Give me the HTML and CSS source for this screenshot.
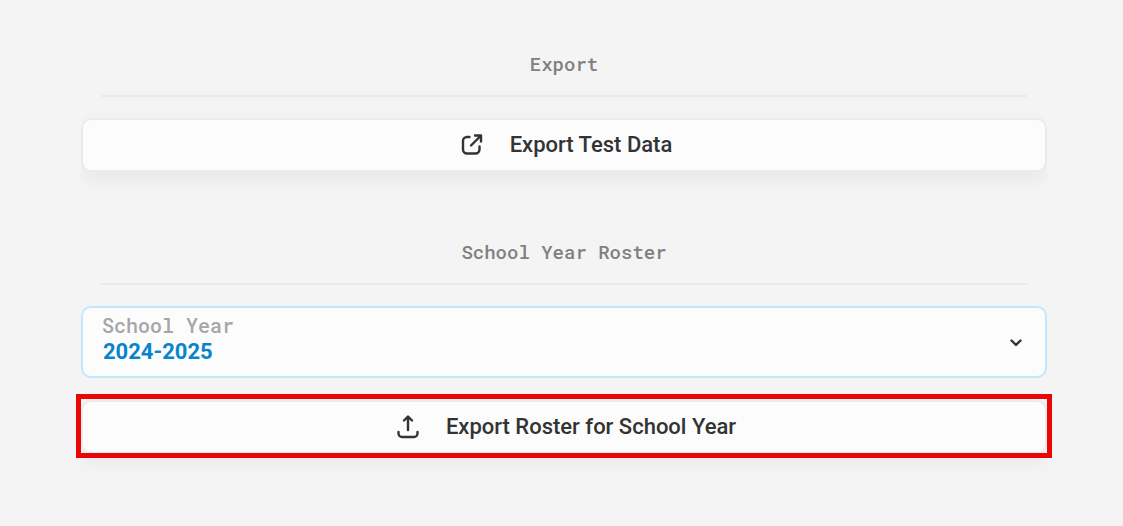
FILE: index.html
```html
<!DOCTYPE html>
<html lang="en">
<head>
<meta charset="UTF-8">
<meta name="viewport" content="width=device-width, initial-scale=1.0">
<title>Export</title>
<link rel="stylesheet" href="styles.css">
</head>
<body>
  <main class="container">
    <section class="export-section">
      <h2>Export</h2>
      <button type="button" class="action-button">
        <svg class="icon" viewBox="0 0 24 24" aria-hidden="true">
          <path d="M9.500 4H7a4 4 0 0 0-4 4v8.500a4 4 0 0 0 4 4h8.500a4 4 0 0 0 4-4V13.500"/>
          <path d="M11 12.500L20.500 3M15 2.500h6v6"/>
        </svg>
        <span>Export Test Data</span>
      </button>
    </section>

    <section class="export-section">
      <h2>School Year Roster</h2>
      <div class="select-field">
        <label for="school-year">School Year</label>
        <select id="school-year">
          <option value="2024-2025">2024-2025</option>
        </select>
        <svg class="chevron" viewBox="0 0 12 8" aria-hidden="true">
          <path d="M1.500 1.500L6 6l4.500-4.500"/>
        </svg>
      </div>
      <div class="highlight">
        <button type="button" class="action-button">
          <svg class="icon" viewBox="0 0 24 24" aria-hidden="true">
            <path d="M12 15V2M8 5.500L12 1.500l4 4"/>
            <path d="M2.500 17v1.500a3.500 3.500 0 0 0 3.500 3.500h12a3.500 3.500 0 0 0 3.500-3.500V17"/>
          </svg>
          <span>Export Roster for School Year</span>
        </button>
      </div>
    </section>
  </main>
</body>
</html>
```

FILE: styles.css
```css
* {
  box-sizing: border-box;
}
body {
  margin: 0;
  background-color: #f4f4f4;
  color: #333333;
  font-family: Roboto, sans-serif;
}
.container {
  padding: 52px 76px 52px 81px;
}
.export-section + .export-section {
  margin-top: 68px;
}
h2 {
  margin: 0 20px 21px;
  padding-bottom: 19px;
  border-bottom: 2px solid #eaeaea;
  color: #808080;
  font-family: "Roboto Mono", "DejaVu Sans Mono", monospace;
  font-size: 19px;
  font-weight: 500;
  line-height: 24px;
  text-align: center;
}
.action-button {
  display: flex;
  align-items: center;
  justify-content: center;
  gap: 26px;
  width: 100%;
  height: 54px;
  padding: 0 0 0 4px;
  border: 2px solid #ebebeb;
  border-radius: 10px;
  background-color: #fcfcfc;
  box-shadow: 0 8px 20px rgba(0, 0, 0, 0.05);
  clip-path: inset(-30px 0);
  color: #333333;
  font-family: inherit;
  font-size: 22px;
  font-weight: 500;
  line-height: 28px;
  cursor: pointer;
}
.icon {
  width: 24px;
  height: 24px;
}
.icon path,
.chevron path {
  fill: none;
  stroke: #333333;
  stroke-width: 2.4;
  stroke-linecap: round;
  stroke-linejoin: round;
}
.select-field {
  position: relative;
  margin-bottom: 22px;
}
.select-field label {
  position: absolute;
  top: 7px;
  left: 21px;
  color: #a6a6a6;
  font-family: "Roboto Mono", "DejaVu Sans Mono", monospace;
  font-size: 20px;
  font-weight: 500;
  line-height: 24px;
}
.select-field select {
  display: block;
  appearance: none;
  width: 100%;
  height: 72px;
  padding: 30px 48px 10px 20px;
  border: 2px solid #c2e8fd;
  border-radius: 10px;
  background-color: #fcfcfc;
  color: #0884cc;
  font-family: inherit;
  font-size: 22px;
  font-weight: 700;
  line-height: 28px;
}
.chevron {
  position: absolute;
  top: 33px;
  right: 25px;
  width: 12px;
  height: 8px;
  pointer-events: none;
}
.highlight {
  position: relative;
}
.highlight::after {
  content: "";
  position: absolute;
  inset: -6px -5px -4px;
  border: 5px solid #ea0606;
  pointer-events: none;
}
```
